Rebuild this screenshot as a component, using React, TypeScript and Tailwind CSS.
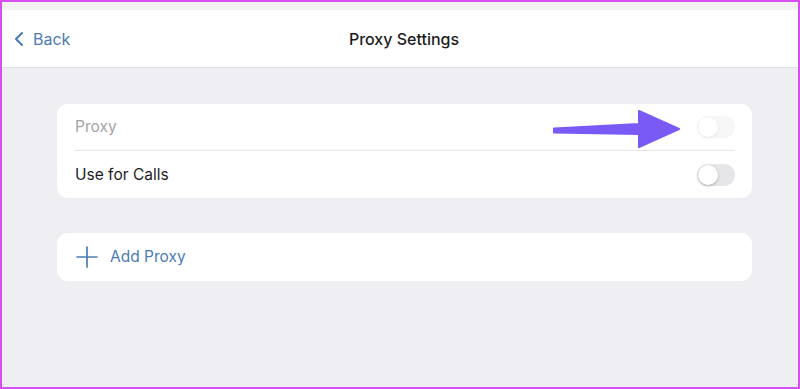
import { ChevronLeft, Plus } from "lucide-react";

function Toggle({ disabled = false }: { disabled?: boolean }) {
  return (
    <div
      className={`relative h-[22px] w-[38px] rounded-full bg-[#e6e6e8] ${
        disabled ? "opacity-30" : ""
      }`}
    >
      <div className="absolute left-[1px] top-[1px] h-[20px] w-[20px] rounded-full bg-white shadow-[0_1px_3px_rgba(0,0,0,0.25)]" />
    </div>
  );
}

export default function App() {
  return (
    <div
      className="relative flex h-[389px] w-[800px] flex-col overflow-hidden border-2 border-[#d64ff0] bg-[#efeef3]"
      style={{ fontFamily: "Inter, 'Liberation Sans', sans-serif" }}
    >
      <div className="h-[8px] bg-[#f4f3f1]" />
      <header className="relative flex h-[58px] items-center border-b border-[#e2e2e4] bg-white">
        <button className="flex items-center gap-[2px] pl-[5px] text-[16px] text-[#4a7cb5]">
          <ChevronLeft className="h-[24px] w-[24px]" strokeWidth={2.1} />
          <span>Back</span>
        </button>
        <h1 className="absolute left-[calc(50%+4px)] -translate-x-1/2 text-[16px] font-medium text-[#1c1c1e]">
          Proxy Settings
        </h1>
      </header>

      <main className="flex flex-col gap-[35px] pl-[55px] pr-[46px] pt-[36px]">
        <section className="relative rounded-[11px] bg-white pl-[18px] pr-[17px]">
          <div className="flex h-[47px] items-center justify-between border-b border-[#e6e6e8]">
            <span className="text-[15.5px] text-[#a3a3a6]">Proxy</span>
            <Toggle disabled />
          </div>
          <div className="flex h-[47px] items-center justify-between">
            <span className="text-[15.5px] text-[#1c1c1e]">Use for Calls</span>
            <Toggle />
          </div>
          <svg
            className="absolute left-[496px] top-[6px]"
            width="130"
            height="40"
            viewBox="0 0 130 40"
          >
            <path
              d="M1 18.5 L86 14 L86 1 L126 19 L86 37 L86 24 L1 22.5 Q-1 20.5 1 18.5 Z"
              fill="#7a5af5"
              strokeLinejoin="round"
              stroke="#7a5af5"
              strokeWidth="2"
            />
          </svg>
        </section>

        <section className="flex h-[48px] items-center gap-[6px] rounded-[11px] bg-white pl-[13px]">
          <Plus className="h-[34px] w-[34px] text-[#4a7cb5]" strokeWidth={1.2} />
          <span className="text-[15.5px] text-[#4a7cb5]">Add Proxy</span>
        </section>
      </main>
    </div>
  );
}
